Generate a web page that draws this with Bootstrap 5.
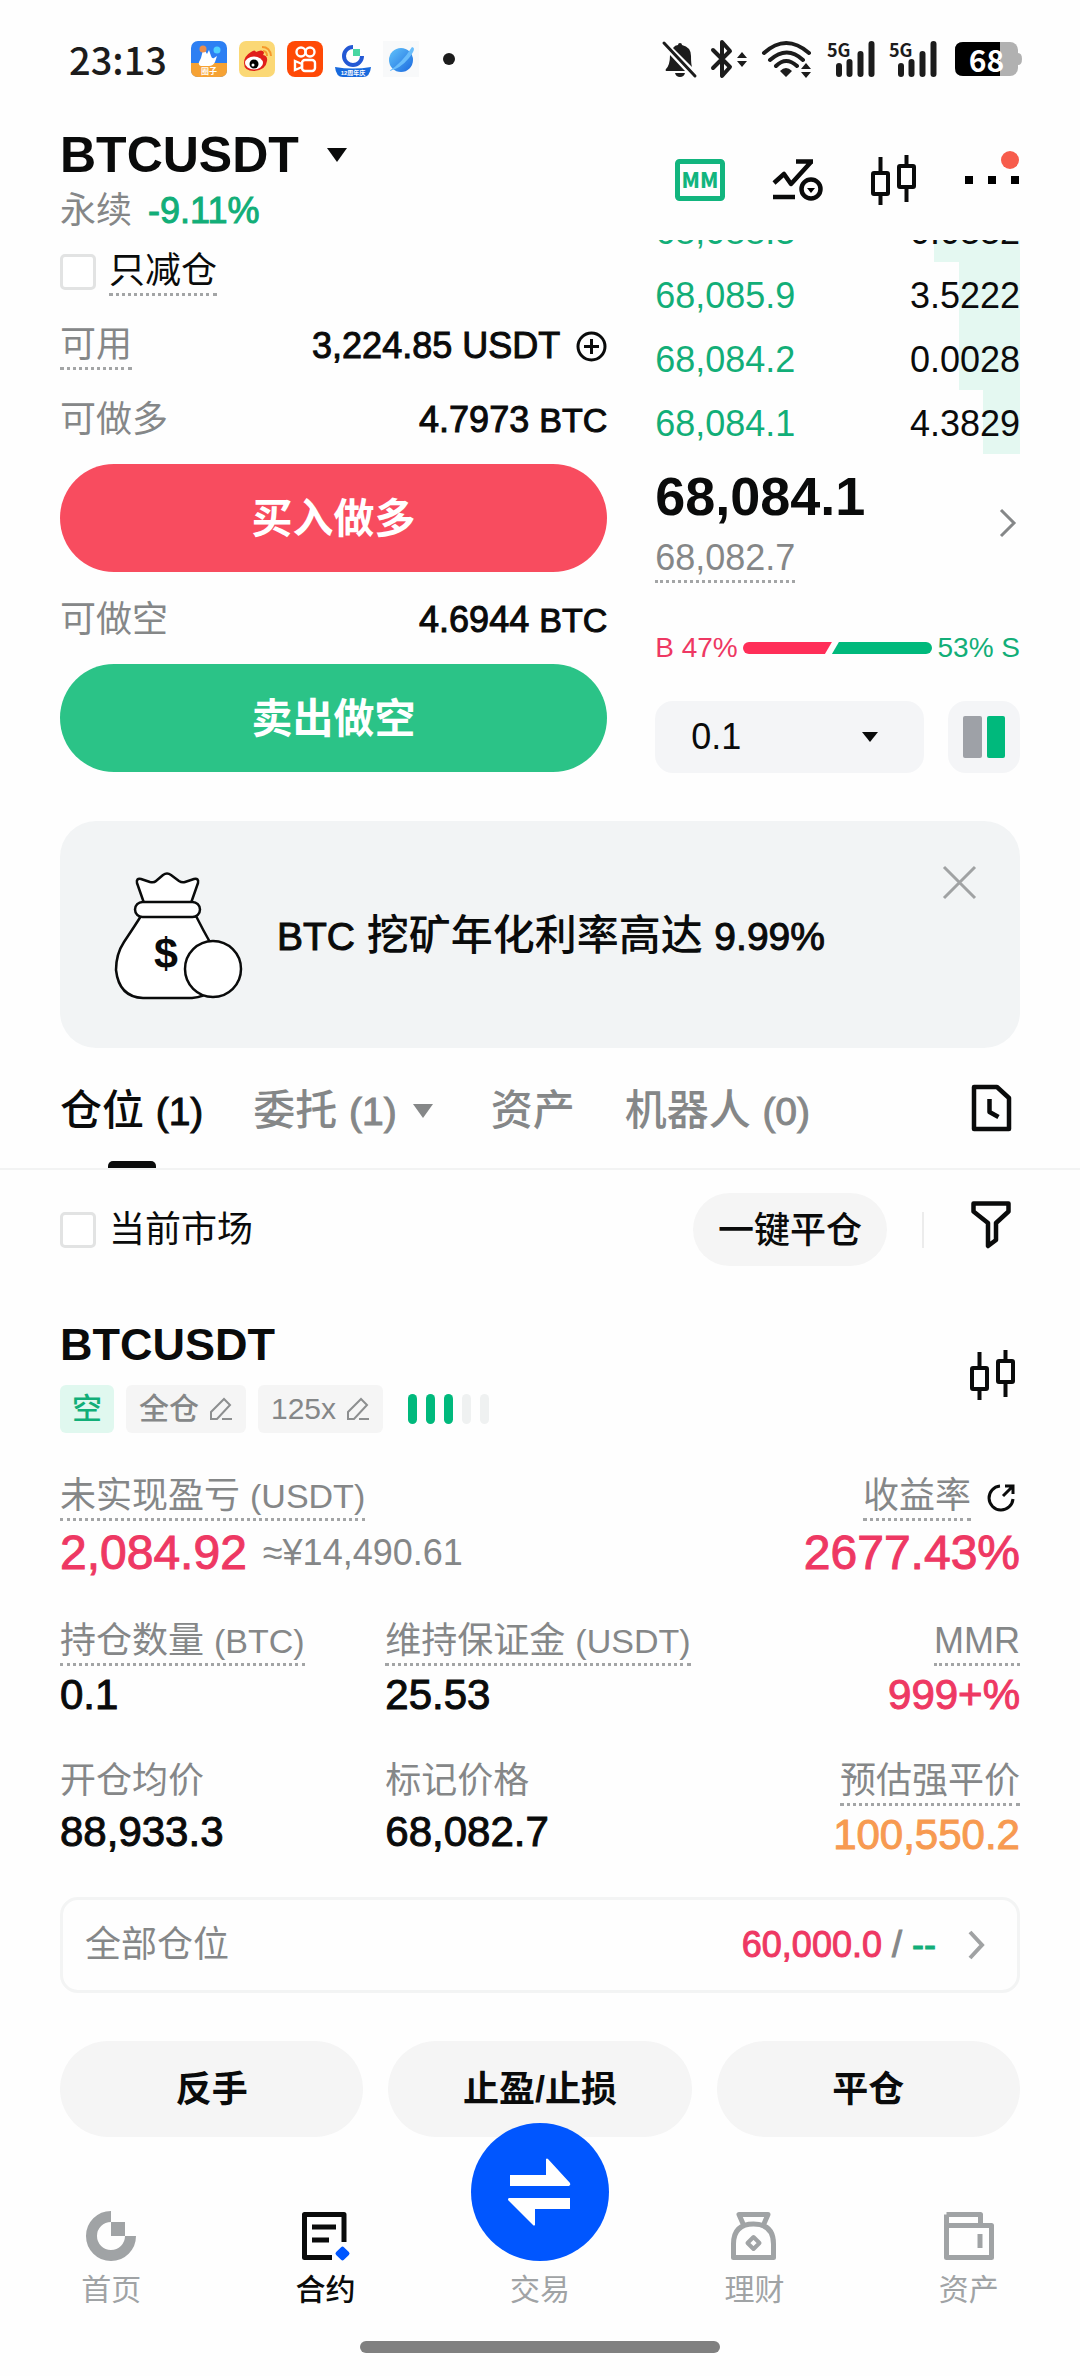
<!DOCTYPE html>
<html lang="zh-CN">
<head>
<meta charset="utf-8">
<meta name="viewport" content="width=device-width, initial-scale=1">
<title>BTCUSDT 永续</title>
<link href="https://cdn.jsdelivr.net/npm/bootstrap@5.3.0/dist/css/bootstrap.min.css" rel="stylesheet">
<script src="https://cdn.jsdelivr.net/npm/bootstrap@5.3.0/dist/js/bootstrap.bundle.min.js"></script>
<style>
:root{--ink:#0a0b0b;--muted:#858788;--up:#12ae78;--upfill:#00b97c;--down:#ee3863;--soft:#f5f5f5;--cool:#f4f5f7}
body{background:#fefefe;color:var(--ink);font-family:"Liberation Sans","Noto Sans CJK SC",sans-serif;font-size:36px;line-height:44px}
svg{display:block;flex:none;overflow:visible}
a{color:inherit;text-decoration:none}
.gutter{padding-left:60px;padding-right:60px}
.plain{border:0;background:none;padding:0;color:inherit}
.muted{color:var(--muted)}
.up{color:var(--up)}
.down{color:var(--down)}
.warn{color:#f79a51}
.stout{-webkit-text-stroke:1px currentColor}
.lat{font-size:34px}
.medium{font-weight:500}
.dotted{border-bottom:3px dotted #a3a5a6}
.statusbar{height:118px;padding-left:69px;padding-right:58px;color:#1c1c1c}
.status-right{gap:13px}
.clock{font-family:"Noto Sans CJK SC",sans-serif;font-weight:500;font-size:38px}
.app-icons{gap:12px}
.cell{width:49px;height:38px}
.cell-tag{top:0;left:0;font-family:"Noto Sans CJK SC",sans-serif;font-weight:700;font-size:18px;line-height:18px}
.battery{width:67px;height:34px}
.battery-level{top:0;left:0;width:63px;text-align:center;font-family:"Noto Sans CJK SC",sans-serif;font-weight:700;font-size:30px;line-height:34px;color:#fff}
.pair{height:122px;padding-top:7px}
.pair-name{font-size:50px;line-height:60px;font-weight:700}
.pair-caret{margin-left:28px}
.pair-sub{margin-top:4px;gap:16px}
.tools{gap:48px;padding-top:2px}
.more-dot{top:-25px;right:1px;width:18px;height:18px;background:#f75c4c}
.trade{gap:48px}
.order-side{flex:3 1 0;min-width:0}
.book-side{flex:2 1 0;min-width:0}
.line-64{height:64px}
.line-84{height:84px}
.tick{width:36px;height:36px;margin:0 13px 0 0;border:3px solid #e2e3e3;border-radius:5px!important;float:none!important;flex:none}
.big-btn{height:108px;border-radius:54px;font-size:41px;font-weight:700;color:#fff;border:0;margin-top:12px}
.big-btn.btn{padding:4px 0 0}
.buy{background:#f84c5f}
.sell{background:#2bc387}
.book{height:214px}
.book-row{padding-top:4px}
.depth{top:0;right:0;background:#e4f8f1}
.last{font-size:54px;line-height:60px;font-weight:700;margin-top:12px}
.markp{margin-top:10px;display:inline-block}
.balance{margin-top:47px;font-size:28px;line-height:36px;gap:5px}
.bar-buy,.bar-sell{height:12px}
.bar-buy{background:#ff2e58;border-radius:6px 0 0 6px;clip-path:polygon(0 0,100% 0,calc(100% - 7px) 100%,0 100%)}
.bar-sell{background:var(--upfill);border-radius:0 6px 6px 0;clip-path:polygon(7px 0,100% 0,100% 100%,0 100%)}
.controls{margin-top:35px;gap:24px}
.step{height:72px;background:var(--cool);border:0;border-radius:18px;padding:0 36px;font-size:36px;color:var(--ink);background-image:none}
.step-arrow{right:46px;top:31px;pointer-events:none}
.layout-btn{width:72px;height:72px;background:var(--cool);border-radius:18px}
.promo{margin-top:48px;background:#f2f4f5;border-radius:36px;padding:45px 44px 45px 54px;min-height:227px}
.promo-text{font-size:42px;margin-left:33px;padding-top:4px}
.promo-text .lat,.tabs .lat{font-size:39px}
.tabs{border-bottom:2px solid #f2f3f3}
.tab-list{gap:50px}
.tab-item{position:relative;padding:41px 0 35px;line-height:43px;font-size:42px;font-weight:500;color:var(--muted)}
.tab-item.on{color:var(--ink)}
.tab-item.on::after{content:"";position:absolute;left:50%;margin-left:-24px;bottom:0;width:48px;height:7px;background:var(--ink);border-radius:5px 5px 0 0}
.filterbar{padding-top:23px}
.pill{background:var(--soft);border:0;border-radius:48px;color:var(--ink)}
.close-all{height:73px;padding:2px 25px 0;font-size:36px;font-weight:500}
.divider{width:2px;height:36px;background:#ececec;margin:0 47px 0 35px}
.filter-icon{margin-bottom:3px}
.pos-head{margin-top:51px}
.pos-name{font-size:45px;line-height:56px;font-weight:700}
.tags{margin-top:12px;gap:12px}
.chip{height:48px;border-radius:6px;background:var(--soft);font-size:30px;padding:0 12px;gap:10px}
.chip.short-side{background:#e0f8ef;color:var(--up);font-weight:500}
.chip.editable{color:var(--muted);font-weight:500;padding:0 13px}
.level{gap:9px;margin-left:13px}
.level i{width:9px;height:30px;border-radius:5px;background:#eff1f1}
.level .lit{background:var(--upfill)}
.stats-top{margin-top:41px}
.stats{margin-top:36px}
.val{font-size:42px;line-height:56px;margin-top:1px}
.val-xl{font-size:48px;line-height:60px;margin-top:2px}
.fiat{font-size:36px}
.summary{margin-top:34px;height:96px;border:3px solid #f3f4f4;border-radius:18px;padding:0 32px 0 22px}
.summary-arrow{margin-left:32px}
.actions{margin-top:48px;gap:25px}
.actions .pill{height:96px;font-size:36px;font-weight:700;padding-top:3px}
.dock{margin-top:74px}
.dock-item{flex:1 1 0;gap:7px;font-size:30px;color:#a0a3a5}
.dock-item.on{color:var(--ink);font-weight:500}
.swap{width:138px;height:138px;margin-top:-88px;border-radius:50%;background:#0056ff}
.home-bar{width:33.333%;height:12px;border-radius:6px;background:#808080;margin:29px auto 21px}
</style>
</head>
<body>
<svg width="0" height="0" class="position-absolute" aria-hidden="true">
  <symbol id="candles" viewBox="0 0 46 50"><g fill="none" stroke="#0a0b0b" stroke-width="4"><rect x="2" y="18" width="15" height="21" rx="1"/><rect x="28" y="11" width="15" height="21" rx="1"/><path d="M9.500 2v16M9.500 39v11M35.500 0v11M35.500 32v15"/></g></symbol>
  <symbol id="pen" viewBox="0 0 24 24"><path d="M2 22v-7L15 2l6 6L8 22zM13 22h10" fill="none" stroke="#8d8f90" stroke-width="2"/></symbol>
  <symbol id="bars" viewBox="0 0 49 38"><path d="M12 26v8M22.500 22v12M33.500 14v20M44.500 4v30" stroke="#1c1c1c" stroke-width="6" stroke-linecap="round"/></symbol>
</svg>

<div class="statusbar d-flex align-items-center justify-content-between">
  <div class="d-flex align-items-center">
    <span class="clock">23:13</span>
    <div class="app-icons d-flex align-items-center ms-4">
      <svg width="36" height="36" viewBox="0 0 36 36"><rect width="36" height="36" rx="7" fill="#2d7ff3"/><path d="M0 22h36v7q0 7-7 7H7q-7 0-7-7z" fill="#f6a234"/><path d="M12 9q3 1 4 4l2-4 2 6q1 3 3 2l3-2-2 6q-2 4-6 4h-8q-3-1-2-4l2-4z" fill="#fff"/><circle cx="12" cy="8" r="3.500" fill="#e98d4e"/><circle cx="26" cy="9" r="3.500" fill="#4fd0ff"/><text x="18" y="33" text-anchor="middle" font-size="8" font-weight="700" fill="#fff">圈子</text></svg>
      <svg width="36" height="36" viewBox="0 0 36 36"><rect width="36" height="36" rx="7" fill="#fbd875"/><path d="M5 22q0-7 7-11 4-3 5 0 6-3 8 0 0 2-1 3 5 1 4 6-1 9-13 10Q5 30 5 22z" fill="#e01e1a"/><ellipse cx="15" cy="22" rx="9" ry="6.500" fill="#fff"/><circle cx="15" cy="23" r="4.500"/><circle cx="14" cy="24" r="1.500" fill="#fff"/><path d="M23 6q8 0 9 9M24 10q4 0 4 5" fill="none" stroke="#f5982c" stroke-width="2"/></svg>
      <svg width="36" height="36" viewBox="0 0 36 36"><rect width="36" height="36" rx="8" fill="#ff4906"/><g fill="none" stroke="#fff" stroke-width="2.400"><circle cx="14" cy="11" r="4.500"/><circle cx="23" cy="11" r="4.500"/><rect x="15" y="19" width="13" height="11" rx="3"/><path d="M15 23l-7-3v9l7-3z"/></g></svg>
      <svg width="36" height="36" viewBox="0 0 36 36"><path d="M18 6a9 9 0 1 0 9 9" fill="none" stroke="#2358d4" stroke-width="4"/><rect x="18" y="8" width="7" height="7" fill="#48d6a2"/><path d="M0 26q18 3 36 0-1 10-8 10H8Q1 36 0 26z" fill="#1769dd"/><text x="18" y="34" text-anchor="middle" font-size="6" font-weight="700" fill="#fff">12周年庆</text></svg>
      <svg width="36" height="36" viewBox="0 0 36 36"><defs><linearGradient id="planet" x1="0" y1="0" x2="1" y2="1"><stop offset="0" stop-color="#62c4fb"/><stop offset="1" stop-color="#1b69df"/></linearGradient></defs><rect width="36" height="36" fill="#f8f9fa"/><circle cx="18" cy="19" r="12" fill="url(#planet)"/><path d="M29 6q5 1-3 11-9 11-20 13 13-8 23-24z" fill="#69bdfb"/></svg>
    </div>
    <svg class="ms-4" width="12" height="12" viewBox="0 0 12 12"><circle cx="6" cy="6" r="6" fill="#1c1c1c"/></svg>
  </div>
  <div class="status-right d-flex align-items-center">
    <svg width="36" height="38" viewBox="0 0 36 38"><path d="M18 3q-2 0-2 2-3 0-5 3l19 19q-1-3-1-11 0-9-9-11 0-2-2-2zM8 15L23 31H4q-1-1 0-2 4-4 4-14zM13 33h10q-1 4-5 4t-5-4z" fill="#1c1c1c"/><path d="M2 3l31 33" stroke="#1c1c1c" stroke-width="3" stroke-linecap="round"/></svg>
    <svg width="38" height="38" viewBox="0 0 38 38"><path d="M2 10l17 17-8 9V2l8 9L2 28" fill="none" stroke="#1c1c1c" stroke-width="4" stroke-linejoin="round" stroke-linecap="round"/><path d="M26 18l5-6 5 6zM26 21l5 6 5-6z" fill="#1c1c1c"/></svg>
    <svg width="52" height="38" viewBox="0 0 52 38"><g fill="none" stroke="#1c1c1c" stroke-width="4" stroke-linecap="round"><path d="M2 13q22-20 45 0M8 20q17-15 33 0M14 26q10-10 21 0"/></g><path d="M18 31q6-6 12 0l-6 6zM39 29l5-6 5 6zM39 32l5 6 5-6z" fill="#1c1c1c"/></svg>
    <div class="cell position-relative"><svg width="49" height="38"><use href="#bars"/></svg><span class="cell-tag position-absolute">5G</span></div>
    <div class="cell position-relative"><svg width="49" height="38"><use href="#bars"/></svg><span class="cell-tag position-absolute">5G</span></div>
    <div class="battery position-relative ms-1"><svg width="67" height="34" viewBox="0 0 67 34"><rect width="63" height="34" rx="8" fill="#b1b1b1"/><path d="M45 0v34H8q-8 0-8-8V8q0-8 8-8z"/><path d="M63 11q4 0 4 6t-4 6z" fill="#b1b1b1"/></svg><span class="battery-level position-absolute">68</span></div>
  </div>
</div>

<header class="gutter d-flex justify-content-between">
  <div class="pair">
    <button type="button" class="plain pair-name d-flex align-items-center text-start">BTCUSDT
      <svg class="pair-caret" width="20" height="14" viewBox="0 0 20 14"><path d="M0 0h20L10 14z" fill="#0a0b0b"/></svg>
    </button>
    <div class="pair-sub d-flex"><span class="muted">永续</span><span class="up stout">-9.11%</span></div>
  </div>
  <div class="tools d-flex align-items-center">
    <button type="button" class="plain" aria-label="做市"><svg width="50" height="42" viewBox="0 0 50 42"><rect x="2.500" y="2.500" width="45" height="37" rx="2" fill="none" stroke="#12b57e" stroke-width="5"/><text x="25" y="29" text-anchor="middle" font-family="Noto Sans CJK SC" font-weight="900" font-size="21" fill="#12b57e">MM</text></svg></button>
    <button type="button" class="plain" aria-label="走势"><svg width="50" height="42" viewBox="0 0 50 42"><g fill="none" stroke="#0a0b0b" stroke-width="4.500"><path d="M1 24l10-9 7 10L38 3M23 2.500h17M0 38h22" stroke-linejoin="round"/><circle cx="38" cy="30" r="9.500"/></g><path d="M34 29h8l-4 5z"/></svg></button>
    <button type="button" class="plain" aria-label="K线"><svg width="46" height="50"><use href="#candles"/></svg></button>
    <button type="button" class="plain position-relative" aria-label="更多"><svg width="55" height="8" viewBox="0 0 55 8"><path d="M0 0h8v8H0zM23 0h8v8h-8zM46 0h8v8h-8z"/></svg><span class="more-dot position-absolute rounded-circle"></span></button>
  </div>
</header>

<main class="gutter">
  <section class="trade d-flex">
    <div class="order-side">
      <div class="line-64 d-flex align-items-center">
        <input class="form-check-input tick" type="checkbox" id="reduce"><label class="dotted" for="reduce">只减仓</label>
      </div>
      <div class="line-84 d-flex align-items-center justify-content-between">
        <span class="muted dotted">可用</span>
        <span class="d-flex align-items-center stout">3,224.85 USDT
          <button type="button" class="plain ms-3" aria-label="充值"><svg width="31" height="31" viewBox="0 0 31 31"><g fill="none" stroke="#0a0b0b" stroke-width="3"><circle cx="15.500" cy="15.500" r="13.500"/><path d="M8 15.500h15M15.500 8v15"/></g></svg></button></span>
      </div>
      <div class="line-64 d-flex align-items-center justify-content-between"><span class="muted">可做多</span><span class="stout">4.7973 <span class="lat">BTC</span></span></div>
      <button type="button" class="btn big-btn buy w-100 d-block">买入做多</button>
      <div class="line-64 d-flex align-items-center justify-content-between mt-3"><span class="muted">可做空</span><span class="stout">4.6944 <span class="lat">BTC</span></span></div>
      <button type="button" class="btn big-btn sell w-100 d-block">卖出做空</button>
    </div>
    <div class="book-side">
      <div class="book d-flex flex-column justify-content-end overflow-hidden">
        <div class="line-64 flex-shrink-0 position-relative"><span class="depth position-absolute h-100" style="width:23.6%"></span><div class="book-row position-relative h-100 d-flex align-items-center justify-content-between"><span class="up">68,088.3</span><span>0.0332</span></div></div>
        <div class="line-64 flex-shrink-0 position-relative"><span class="depth position-absolute h-100" style="width:16.7%"></span><div class="book-row position-relative h-100 d-flex align-items-center justify-content-between"><span class="up">68,085.9</span><span>3.5222</span></div></div>
        <div class="line-64 flex-shrink-0 position-relative"><span class="depth position-absolute h-100" style="width:16.7%"></span><div class="book-row position-relative h-100 d-flex align-items-center justify-content-between"><span class="up">68,084.2</span><span>0.0028</span></div></div>
        <div class="line-64 flex-shrink-0 position-relative"><span class="depth position-absolute h-100" style="width:10.1%"></span><div class="book-row position-relative h-100 d-flex align-items-center justify-content-between"><span class="up">68,084.1</span><span>4.3829</span></div></div>
      </div>
      <div class="d-flex align-items-center justify-content-between">
        <div>
          <div class="last">68,084.1</div>
          <span class="markp muted dotted">68,082.7</span>
        </div>
        <svg class="me-1 mt-2" width="16" height="28" viewBox="0 0 16 28"><path d="M1 1l13 13L1 27" fill="none" stroke="#858788" stroke-width="3"/></svg>
      </div>
      <div class="balance d-flex align-items-center">
        <span class="down">B 47%</span>
        <div class="flex-fill d-flex"><div class="bar-buy" style="width:47%"></div><div class="bar-sell" style="width:53%"></div></div>
        <span class="up">53% S</span>
      </div>
      <div class="controls d-flex">
        <div class="flex-fill position-relative">
          <select class="form-select step" aria-label="价格精度"><option>0.1</option><option>1</option><option>10</option></select>
          <svg class="step-arrow position-absolute" width="16" height="10" viewBox="0 0 16 10"><path d="M0 0h16L8 10z" fill="#0a0b0b"/></svg>
        </div>
        <button type="button" class="plain layout-btn d-flex align-items-center justify-content-center" aria-label="盘口布局"><svg width="42" height="42" viewBox="0 0 42 42"><rect width="19" height="42" rx="2" fill="#9ea1a7"/><rect x="24" width="18" height="42" rx="2" fill="#00b97c"/></svg></button>
      </div>
    </div>
  </section>

  <section class="promo d-flex align-items-center">
    <svg width="130" height="128" viewBox="0 0 130 128"><g fill="#fff" stroke="#0a0b0b" stroke-width="2.500" stroke-linejoin="round"><path d="M30 32L23 12q-1-5 4-4l9 3q4 1 6-1l7-6q4-3 8 0l8 6q3 2 6 1l9-3q5-1 4 4l-7 20z"/><path d="M27 45h55q7 14 15 28 8 16 8 26-2 26-27 28H29Q5 126 2 99q0-16 8-28 12-18 17-26z"/><rect x="21" y="31" width="65" height="15" rx="7.500"/><circle cx="99" cy="98" r="28"/></g><text x="52" y="97" text-anchor="middle" font-family="Liberation Sans" font-weight="700" font-size="43" fill="#0a0b0b">$</text></svg>
    <div class="promo-text flex-fill"><span class="lat stout">BTC</span> <span class="medium">挖矿年化利率高达</span> <span class="lat stout">9.99%</span></div>
    <button type="button" class="plain align-self-start" aria-label="关闭"><svg width="33" height="33" viewBox="0 0 33 33"><path d="M1 1l31 31M32 1L1 32" stroke="#a0a2a3" stroke-width="3"/></svg></button>
  </section>
</main>

<nav class="tabs gutter d-flex align-items-center justify-content-between">
  <div class="tab-list d-flex">
    <a class="tab-item on" href="#">仓位 <span class="lat stout">(1)</span></a>
    <a class="tab-item d-flex align-items-center" href="#"><span>委托 <span class="lat stout">(1)</span></span><svg class="ms-3 me-2" width="20" height="14" viewBox="0 0 20 14"><path d="M0 0h20L10 14z" fill="#858788"/></svg></a>
    <a class="tab-item" href="#">资产</a>
    <a class="tab-item" href="#">机器人 <span class="lat stout">(0)</span></a>
  </div>
  <button type="button" class="plain me-2" aria-label="历史"><svg width="41" height="48" viewBox="0 0 41 48"><g fill="none" stroke="#0a0b0b" stroke-width="4.500" stroke-linejoin="round"><path d="M3 3h23l12 11v31H3z"/><path d="M18.500 15v13l9 5"/></g></svg></button>
</nav>

<section class="gutter">
  <div class="filterbar d-flex align-items-center">
    <input class="form-check-input tick" type="checkbox" id="current"><label for="current">当前市场</label>
    <button type="button" class="pill close-all ms-auto">一键平仓</button>
    <span class="divider"></span>
    <button type="button" class="plain filter-icon me-2" aria-label="筛选"><svg width="41" height="54" viewBox="0 0 41 54"><path d="M2.500 2.500h35v8L25 22v17l-8 6V22L2.500 10.500z" fill="none" stroke="#0a0b0b" stroke-width="4.500" stroke-linejoin="round"/></svg></button>
  </div>

  <div class="pos-head d-flex align-items-center justify-content-between">
    <div>
      <div class="pos-name">BTCUSDT</div>
      <div class="tags d-flex align-items-center">
        <span class="chip short-side d-flex align-items-center">空</span>
        <button type="button" class="pill chip editable d-flex align-items-center"><span>全仓</span><svg width="24" height="24"><use href="#pen"/></svg></button>
        <button type="button" class="pill chip editable d-flex align-items-center"><span>125x</span><svg width="24" height="24"><use href="#pen"/></svg></button>
        <div class="level d-flex"><i class="lit"></i><i class="lit"></i><i class="lit"></i><i></i><i></i></div>
      </div>
    </div>
    <button type="button" class="plain me-1" aria-label="K线"><svg width="46" height="50"><use href="#candles"/></svg></button>
  </div>

  <div class="stats-top d-flex justify-content-between">
    <div>
      <span class="muted dotted d-inline-block">未实现盈亏 <span class="lat">(USDT)</span></span>
      <div class="val-xl down d-flex align-items-center"><span class="stout">2,084.92</span><span class="muted fiat ms-3">≈¥14,490.61</span></div>
    </div>
    <div class="text-end">
      <div class="d-flex justify-content-end align-items-center"><span class="muted dotted">收益率</span><button type="button" class="plain ms-3 me-1" aria-label="分享收益"><svg width="29" height="28" viewBox="0 0 29 28"><g fill="none" stroke="#0a0b0b" stroke-width="3"><path d="M13 2A12 12 0 1 0 26 15M16 12L26 2M18 2h8v8"/></g></svg></button></div>
      <div class="val-xl down stout">2677.43%</div>
    </div>
  </div>

  <div class="stats row gx-3">
    <div class="col-4"><span class="muted dotted d-inline-block">持仓数量 <span class="lat">(BTC)</span></span><div class="val stout">0.1</div></div>
    <div class="col-4 text-nowrap"><span class="muted dotted d-inline-block">维持保证金 <span class="lat">(USDT)</span></span><div class="val stout">25.53</div></div>
    <div class="col-4 text-end"><span class="muted dotted d-inline-block">MMR</span><div class="val down stout">999+%</div></div>
  </div>
  <div class="stats row gx-3">
    <div class="col-4"><span class="muted d-inline-block">开仓均价</span><div class="val stout">88,933.3</div></div>
    <div class="col-4"><span class="muted d-inline-block">标记价格</span><div class="val stout">68,082.7</div></div>
    <div class="col-4 text-end"><span class="muted dotted d-inline-block">预估强平价</span><div class="val warn stout">100,550.2</div></div>
  </div>

  <a href="#" class="summary d-flex align-items-center">
    <span class="muted me-auto">全部仓位</span>
    <span class="stout"><span class="down">60,000.0</span> <span class="muted">/</span> <span class="up">--</span></span>
    <svg class="summary-arrow" width="17" height="28" viewBox="0 0 17 28"><path d="M2 1l12 13L2 27" fill="none" stroke="#a0a2a3" stroke-width="4"/></svg>
  </a>

  <div class="actions d-flex">
    <button type="button" class="pill w-100">反手</button>
    <button type="button" class="pill w-100">止盈/止损</button>
    <button type="button" class="pill w-100">平仓</button>
  </div>
</section>

<nav class="dock d-flex px-1">
  <a href="#" class="dock-item d-flex flex-column align-items-center"><svg width="50" height="50" viewBox="0 0 50 50"><path d="M25 5.500A19.500 19.500 0 1 0 44.500 25" fill="none" stroke="#a0a3a5" stroke-width="11"/><rect x="25" y="11" width="14" height="14" fill="#a0a3a5"/></svg>首页</a>
  <a href="#" class="dock-item on d-flex flex-column align-items-center"><svg width="50" height="50" viewBox="0 0 50 50"><path d="M31 46.500H3.500v-43H43V31M11 16h24M11 29h17" fill="none" stroke="#0a0b0b" stroke-width="5" stroke-linejoin="round"/><rect x="36" y="37" width="11" height="11" rx="2" transform="rotate(45 41.500 42.500)" fill="#0056ff"/></svg>合约</a>
  <a href="#" class="dock-item d-flex flex-column align-items-center"><span class="swap d-flex align-items-center justify-content-center"><svg width="64" height="68" viewBox="0 0 64 68"><path d="M2 17h36V1q1-1 2 0l22 24q1 2-1 3H2zM62 51H27v16q-1 1-2 0L0 42q0-2 1-2h61z" fill="#fff"/></svg></span>交易</a>
  <a href="#" class="dock-item d-flex flex-column align-items-center"><svg width="50" height="50" viewBox="0 0 50 50"><g fill="none" stroke="#a0a3a5" stroke-width="5" stroke-linejoin="round"><path d="M15 15L10 3.500h29L34 15M4.500 46.500V33q0-20 20-20t20 20v13.500z"/><path d="M24.500 26l6 6-6 6-6-6z" stroke-width="4"/></g></svg>理财</a>
  <a href="#" class="dock-item d-flex flex-column align-items-center"><svg width="50" height="50" viewBox="0 0 50 50"><path d="M2.500 3.500h34V14.500M2.500 14.500h45v32h-45zM2.500 3.500v20M36 23v14" fill="none" stroke="#a0a3a5" stroke-width="5" stroke-linejoin="round"/></svg>资产</a>
</nav>
<div class="home-bar"></div>
</body>
</html>
